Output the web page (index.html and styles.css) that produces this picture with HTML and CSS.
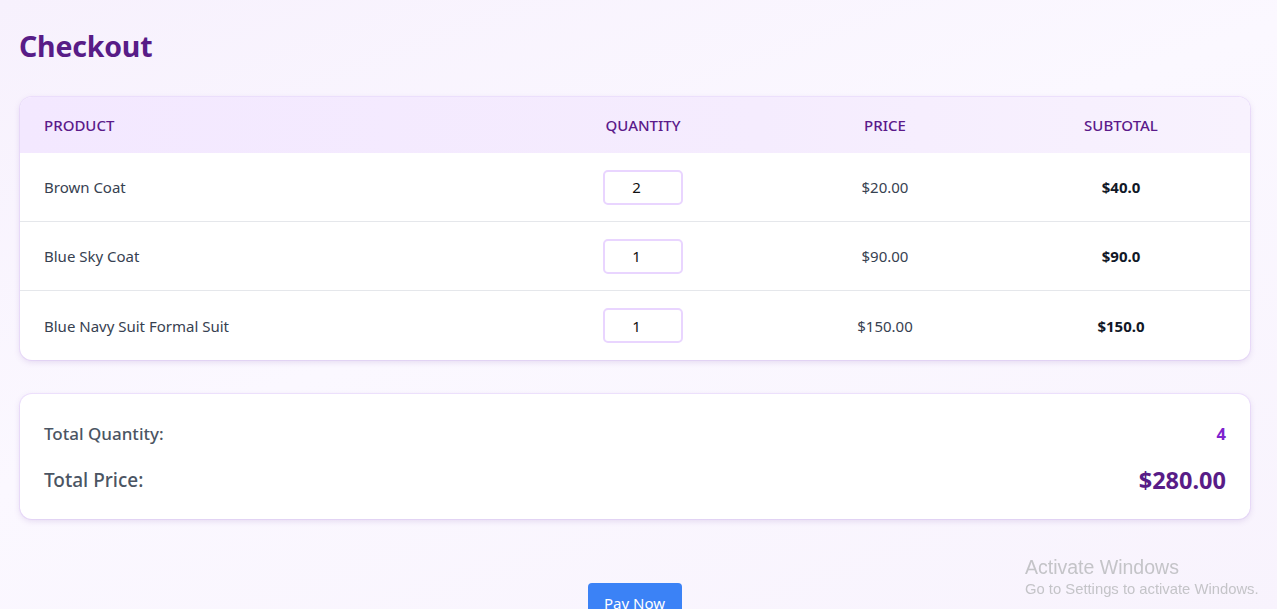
FILE: index.html
```html
<!DOCTYPE html>
<html lang="en">
<head>
<meta charset="utf-8">
<title>Checkout</title>
<link rel="stylesheet" href="styles.css">
</head>
<body>
<main class="page">
  <h1 class="title">Checkout</h1>
  <section class="card table-card">
    <div class="row head">
      <div class="cell product">PRODUCT</div>
      <div class="cell center">QUANTITY</div>
      <div class="cell center">PRICE</div>
      <div class="cell center subtotal">SUBTOTAL</div>
    </div>
    <div class="row">
      <div class="cell product">Brown Coat</div>
      <div class="cell center"><input class="qty" type="text" value="2"></div>
      <div class="cell center">$20.00</div>
      <div class="cell center subtotal strong">$40.0</div>
    </div>
    <div class="row">
      <div class="cell product">Blue Sky Coat</div>
      <div class="cell center"><input class="qty" type="text" value="1"></div>
      <div class="cell center">$90.00</div>
      <div class="cell center subtotal strong">$90.0</div>
    </div>
    <div class="row last">
      <div class="cell product">Blue Navy Suit Formal Suit</div>
      <div class="cell center"><input class="qty" type="text" value="1"></div>
      <div class="cell center">$150.00</div>
      <div class="cell center subtotal strong">$150.0</div>
    </div>
  </section>
  <section class="card summary">
    <div class="sum-line">
      <span class="sum-label">Total Quantity:</span>
      <span class="sum-qty">4</span>
    </div>
    <div class="sum-line">
      <span class="sum-label big">Total Price:</span>
      <span class="sum-price">$280.00</span>
    </div>
  </section>
  <div class="actions">
    <button class="pay" type="button">Pay Now</button>
  </div>
</main>
<div class="watermark">
  <div class="wm-title">Activate Windows</div>
  <div class="wm-sub">Go to Settings to activate Windows.</div>
</div>
</body>
</html>
```
FILE: styles.css
```css
* { box-sizing: border-box; }
html, body { margin: 0; padding: 0; }
body {
  font-family: "Noto Sans", "Open Sans", sans-serif;
  background: linear-gradient(160deg, #f7f1fd 0%, #fbf8ff 45%, #f8f3fd 100%);
  min-height: 609px;
  overflow: hidden;
  color: #374151;
}
.page {
  padding: 26px 27px 0 20px;
}
.title {
  margin: 0 0 31px -1px;
  font-size: 28.5px;
  font-weight: 700;
  color: #581c87;
  line-height: 40px;
  letter-spacing: -0.2px;
}
.card {
  background: #fff;
  border-radius: 12px;
  box-shadow: 0 2px 6px rgba(120, 80, 170, 0.18), 0 0 0 1px rgba(233, 213, 255, 0.5);
}
.table-card { overflow: hidden; }
.row {
  display: grid;
  grid-template-columns: 502px 242px 242px 1fr;
  height: 69px;
  align-items: center;
  border-bottom: 1px solid #e5e7eb;
  font-size: 15px;
}
.row.last { border-bottom: 0; height: 69px; }
.row.head {
  height: 56px;
  border-bottom: 0;
  background: linear-gradient(90deg, #f3e8ff 0%, #f5ecfe 60%, #f8f2fe 100%);
  color: #5b1a8a;
  font-weight: 500;
  font-size: 15px;
}
.cell.product { padding-left: 24px; }
.cell.center { text-align: center; }
.cell.subtotal { padding-right: 14px; }
.strong { font-weight: 700; color: #111827; }
.qty {
  width: 80px;
  height: 35px;
  border: 2px solid #e9d5ff;
  border-radius: 5px;
  text-align: center;
  font-family: inherit;
  font-size: 15px;
  color: #111;
  background: #fff;
  outline: none;
  padding: 0 13px 0 0;
  vertical-align: middle;
}
.summary {
  margin-top: 34px;
  padding: 28px 24px 23px 24px;
  display: flex;
  flex-direction: column;
  gap: 19px;
}
.sum-line {
  display: flex;
  justify-content: space-between;
  align-items: center;
}
.sum-label {
  font-size: 17px;
  font-weight: 500;
  color: #4b5563;
}
.sum-label.big { font-size: 19px; }
.sum-qty {
  font-size: 16.5px;
  font-weight: 700;
  color: #7e22ce;
}
.sum-price {
  font-size: 23.5px;
  font-weight: 700;
  color: #581c87;
}
.actions {
  display: flex;
  justify-content: center;
  margin-top: 64px;
  padding-right: 1px;
}
.pay {
  background: #3b82f6;
  color: #fff;
  border: 0;
  border-radius: 4px;
  font-family: inherit;
  font-size: 15px;
  width: 94px;
  height: 40px;
  padding: 0;
}
.watermark {
  position: fixed;
  left: 1025px;
  top: 555px;
  color: #c4c4c8;
  font-family: "Liberation Sans", "Noto Sans", sans-serif;
}
.wm-title { font-size: 19.5px; line-height: 24px; }
.wm-sub { font-size: 14.8px; line-height: 20px; }
```
